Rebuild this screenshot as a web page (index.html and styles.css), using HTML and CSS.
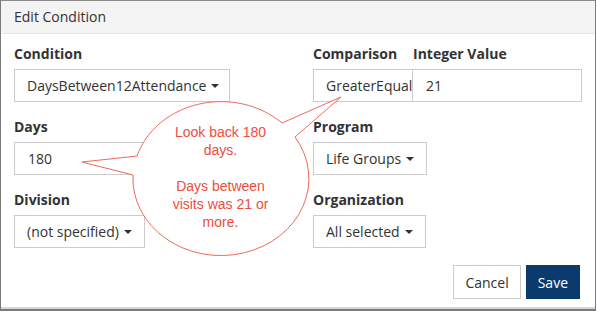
FILE: index.html
```html
<!DOCTYPE html>
<html lang="en">
<head>
    <meta charset="UTF-8">
    <title>Edit Condition</title>
    <link rel="stylesheet" href="styles.css">
</head>
<body>
    <div class="window">
        <div class="modal">
            <div class="modal-header">
                <h4 class="modal-title">Edit Condition</h4>
            </div>
            <div class="modal-body">
                <div class="col">
                    <div class="field">
                        <label>Condition</label>
                        <div class="select condition-select">DaysBetween12Attendance<span class="caret"></span></div>
                    </div>
                    <div class="field">
                        <label>Days</label>
                        <div class="text-input days-input">180</div>
                    </div>
                    <div class="field">
                        <label>Division</label>
                        <div class="select">(not specified)<span class="caret"></span></div>
                    </div>
                </div>
                <div class="col">
                    <div class="field-pair">
                        <div class="field comparison">
                            <label>Comparison</label>
                            <div class="select comparison-select">GreaterEqual</div>
                        </div>
                        <div class="field integer">
                            <label>Integer Value</label>
                            <div class="text-input integer-input">21</div>
                        </div>
                    </div>
                    <div class="field">
                        <label>Program</label>
                        <div class="select">Life Groups<span class="caret"></span></div>
                    </div>
                    <div class="field">
                        <label>Organization</label>
                        <div class="select">All selected<span class="caret"></span></div>
                    </div>
                </div>
            </div>
            <div class="modal-footer">
                <button class="btn btn-default">Cancel</button>
                <button class="btn btn-primary">Save</button>
            </div>
        </div>

        <!-- annotation bubble drawn over the form -->
        <div class="callout">
            <svg class="callout-shape" width="597" height="313" viewBox="0 0 597 313">
                <path d="M137 156 L82 162 L133 175 A88 77 0 1 0 295 137 L341 97 L282 123 A88 77 0 0 0 137 156 Z"
                      fill="#ffffff" stroke="#ef6a5c" stroke-width="1"/>
            </svg>
            <div class="callout-text">
                Look back 180<br>days.<br><br>Days between<br>visits was 21 or<br>more.
            </div>
        </div>
    </div>
</body>
</html>
```

FILE: styles.css
```css
body {
    margin: 0;
    background-color: #ffffff;
    font-family: "Open Sans", "Liberation Sans", sans-serif;
    font-size: 14px;
    color: #333333;
}

.window {
    position: relative;
    width: 596px;
    box-sizing: border-box;
    border-top: 1px solid #8a8a8a;
    border-left: 1px solid #7a7a7a;
    border-right: 1px solid #7a7a7a;
    border-bottom: 2px solid #7a7a7a;
}

.modal {
    border-bottom: 2px solid #d6d6d6;
}

.modal-header {
    height: 33px;
    background-color: #f4f4f4;
    border-bottom: 1px solid #e5e5e5;
    padding: 0 13px;
    box-sizing: border-box;
    display: flex;
    align-items: center;
}

.modal-title {
    margin: 0;
    font-size: 14px;
    font-weight: normal;
    line-height: 20px;
    color: #333333;
}

.modal-body {
    display: grid;
    grid-template-columns: 299px 1fr;
    padding: 10px 13px 0 13px;
}

.col {
    display: flex;
    flex-direction: column;
    gap: 15px;
}

.field {
    display: flex;
    flex-direction: column;
    align-items: flex-start;
}

.field label {
    display: block;
    font-weight: bold;
    line-height: 20px;
    margin-bottom: 5px;
}

.field-pair {
    display: flex;
}

.select,
.text-input {
    height: 33px;
    box-sizing: border-box;
    border: 1px solid #cccccc;
    background-color: #ffffff;
    line-height: 31px;
    white-space: nowrap;
}

.select {
    display: inline-flex;
    align-items: center;
    padding: 0 12px;
}

.caret {
    display: inline-block;
    width: 0;
    height: 0;
    margin-left: 5px;
    margin-top: 1px;
    border-top: 4px solid #333333;
    border-left: 4px solid transparent;
    border-right: 4px solid transparent;
}

.condition-select {
    width: 216px;
}

.days-input {
    width: 216px;
    padding: 0 13px;
}

.comparison-select {
    display: block;
    width: 100px;
    overflow: hidden;
}

.integer-input {
    width: 170px;
    padding: 0 13px;
    margin-left: -1px;
}

.modal-footer {
    display: flex;
    justify-content: flex-end;
    gap: 5px;
    padding: 17px 15px 8px 14px;
}

.btn {
    height: 34px;
    padding: 0 11px;
    font-family: "Open Sans", "Liberation Sans", sans-serif;
    font-size: 14px;
    border: 1px solid #cccccc;
    border-radius: 0;
    cursor: pointer;
}

.btn-default {
    background-color: #ffffff;
    color: #333333;
}

.btn-primary {
    background-color: #0b3b6d;
    border-color: #0b3b6d;
    color: #ffffff;
}

.callout {
    position: absolute;
    top: -1px;
    left: -1px;
    width: 597px;
    height: 313px;
    pointer-events: none;
}

.callout-shape {
    position: absolute;
    top: 0;
    left: 0;
}

.callout-text {
    position: absolute;
    top: 123px;
    left: 140px;
    width: 161px;
    text-align: center;
    font-family: "Liberation Sans", Arial, sans-serif;
    font-size: 14px;
    line-height: 18px;
    color: #ee4c3c;
}
```
